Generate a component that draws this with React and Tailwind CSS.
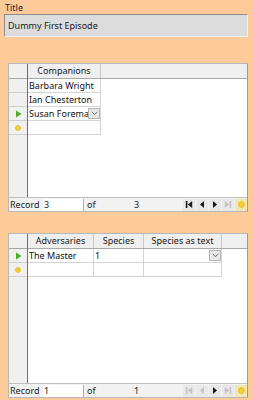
import React from 'react';

const font = { fontFamily: '"Noto Sans", "Open Sans", sans-serif' };

const Chevron = () => (
  <svg width="7" height="5" viewBox="0 0 7 5" className="block">
    <path d="M0.8 1 L3.5 3.6 L6.2 1" fill="none" stroke="#606060" strokeWidth="0.9" />
  </svg>
);

const DropBtn = () => (
  <div className="w-[12px] h-[11px] bg-[#e6e6e6] border border-[#b4b4b4] flex items-center justify-center">
    <Chevron />
  </div>
);

const Arrow = () => (
  <svg width="7" height="8" viewBox="0 0 7 8" className="block">
    <path d="M1 0.5 L6.5 4 L1 7.5 Z" fill="#4caf2a" />
  </svg>
);

const Dot = ({ size = 6 }) => (
  <svg width={size} height={size} viewBox="0 0 6 6" className="block">
    <circle cx="3" cy="3" r="2.5" fill="#f2d12e" stroke="#e0b020" strokeWidth="0.6" />
  </svg>
);

const NavIcon = ({ type, on }) => {
  const c = on ? '#1a1a1a' : '#c4c4c4';
  return (
    <svg width="8" height="9" viewBox="0 0 8 9" className="block">
      {type === 'first' && (
        <>
          <rect x="0.8" y="1" width="1.6" height="7" fill={c} />
          <path d="M7.2 1 L2.8 4.5 L7.2 8 Z" fill={c} />
        </>
      )}
      {type === 'prev' && <path d="M6 1 L2 4.5 L6 8 Z" fill={c} />}
      {type === 'next' && <path d="M2 1 L6 4.5 L2 8 Z" fill={c} />}
      {type === 'last' && (
        <>
          <path d="M0.8 1 L5.2 4.5 L0.8 8 Z" fill={c} />
          <rect x="5.6" y="1" width="1.6" height="7" fill={c} />
        </>
      )}
    </svg>
  );
};

const RecordBar = ({ value, total, nav }) => (
  <div className="h-[14px] flex items-center bg-[#f2f2f2] border-t border-[#c0c0c0] text-[9px] text-[#202020]">
    <span className="pl-[1px] w-[34px]">Record</span>
    <div className="w-[41px] h-[12px] bg-white border-r border-[#b0b0b0] pl-[1px] leading-[12px]">{value}</div>
    <span className="pl-[3px] w-[50px]">of</span>
    <span className="w-[48px]">{total}</span>
    <div className="flex items-center gap-[1px] ml-auto">
      {['first', 'prev', 'next', 'last'].map((t, i) => (
        <div key={t} className="w-[12px] h-[12px] bg-[#e8e8e8] flex items-center justify-center">
          <NavIcon type={t} on={nav[i]} />
        </div>
      ))}
      <div className="w-[12px] h-[12px] bg-[#f3e7b0] flex items-center justify-center">
        <Dot size={7} />
      </div>
    </div>
  </div>
);

const Grid = ({ cols, rows, current, height, record, total, nav }) => (
  <div
    className="ml-[8px] w-[240px] flex flex-col bg-white border border-[#b8b8b8] border-r-[#9a9a9a]"
    style={{ height }}
  >
    <div className="flex-1 flex min-h-0">
      <div className="w-[19px] flex flex-col bg-[#f0f0f0] border-r border-[#6e6e6e]">
        <div className="h-[15px] border-b border-[#a8a8a8]" />
        {rows.map((_, i) => (
          <div key={i} className="h-[14px] border-b border-[#d0d0d0] flex items-center justify-center">
            {i === current && <Arrow />}
          </div>
        ))}
        <div className="h-[14px] border-b border-[#d0d0d0] flex items-center justify-center">
          <Dot />
        </div>
        <div className="flex-1" />
      </div>
      <div className="flex-1 flex flex-col">
        <div className="h-[15px] flex bg-[#efefef] border-b border-[#a8a8a8] text-[9px] text-[#202020]">
          {cols.map((c) => (
            <div
              key={c.name}
              className="border-r border-[#c8c8c8] flex items-center justify-center"
              style={{ width: c.w }}
            >
              {c.name}
            </div>
          ))}
          <div className="flex-1" />
        </div>
        {[...rows, []].map((r, i) => (
          <div key={i} className="h-[14px] flex text-[9px] text-[#101010]">
            {cols.map((c, j) => (
              <div
                key={c.name}
                className="border-r border-b border-[#d4d4d4] flex items-center pl-[1px] overflow-hidden whitespace-nowrap"
                style={{ width: c.w }}
              >
                <span className="flex-1 overflow-hidden">{r[j] && r[j].text}</span>
                {r[j] && r[j].drop && <DropBtn />}
              </div>
            ))}
          </div>
        ))}
        <div className="flex-1" />
      </div>
    </div>
    <RecordBar value={record} total={total} nav={nav} />
  </div>
);

export default function App() {
  return (
    <div className="w-[253px] h-[400px] bg-[#ffca99] flex flex-col overflow-hidden" style={font}>
      <div className="pl-[5px] pt-[2px] text-[9px] text-[#202020] leading-[12px]">Title</div>
      <div className="ml-[4px] w-[244px] h-[23px] bg-[#dcdcdc] border border-[#8c8c8c] border-r-[#f0f0f0] border-b-[#f0f0f0] flex items-center pl-[3px] text-[9px] text-[#1a1a1a]">
        Dummy First Episode
      </div>
      <div className="h-[26px]" />
      <Grid
        cols={[{ name: 'Companions', w: 73 }]}
        rows={[
          [{ text: 'Barbara Wright' }],
          [{ text: 'Ian Chesterton' }],
          [{ text: 'Susan Foreman', drop: true }],
        ]}
        current={2}
        height={149}
        record="3"
        total="3"
        nav={[true, true, true, false]}
      />
      <div className="h-[21px]" />
      <Grid
        cols={[
          { name: 'Adversaries', w: 66 },
          { name: 'Species', w: 50 },
          { name: 'Species as text', w: 78 },
        ]}
        rows={[[{ text: 'The Master' }, { text: '1' }, { text: '', drop: true }]]}
        current={0}
        height={165}
        record="1"
        total="1"
        nav={[false, false, true, false]}
      />
    </div>
  );
}
